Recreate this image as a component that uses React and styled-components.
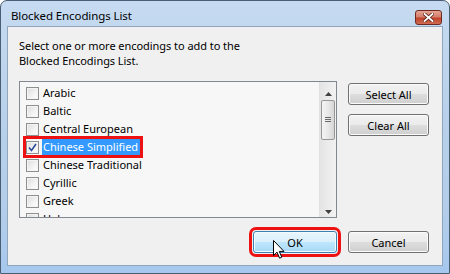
import React from 'react';
import styled, { createGlobalStyle } from 'styled-components';

const GlobalStyle = createGlobalStyle`
  html, body {
    margin: 0;
    padding: 0;
    background: #ffffff;
  }
  body {
    font-family: "Noto Sans", "Open Sans", sans-serif;
    font-size: 11px;
    color: #000;
  }
`;

const Window = styled.div`
  position: relative;
  width: 450px;
  height: 274px;
  box-sizing: border-box;
  border: 1px solid #4b5d70;
  border-radius: 7px 7px 0 0;
  background: linear-gradient(180deg, #c6dbf1 0%, #b9d1ea 40%, #b2cdea 80%, #a6c8ee 100%);
  padding: 0 6px 7px 6px;
  display: flex;
  flex-direction: column;
`;

const TitleBar = styled.div`
  height: 26px;
  display: flex;
  align-items: center;
  justify-content: space-between;
  padding-left: 4px;
`;

const Title = styled.span`
  font-size: 11.5px;
  color: #000;
  letter-spacing: -0.1px;
  padding-top: 4px;
`;

const CloseButton = styled.div`
  width: 27px;
  height: 15px;
  margin-top: 8px;
  margin-right: 1px;
  box-sizing: border-box;
  border: 1px solid #6d2a22;
  border-radius: 3px;
  background: linear-gradient(180deg, #e8a493 0%, #d47f6c 45%, #c2422a 55%, #cf6d52 100%);
  display: flex;
  align-items: center;
  justify-content: center;
`;

const Client = styled.div`
  flex: 1;
  background: #f0f0f0;
  border: 1px solid #8fa6bd;
  padding: 11px 12px 12px 11px;
  display: grid;
  grid-template-columns: 318px 81px;
  grid-template-rows: auto 137px 22px;
  column-gap: 11px;
  row-gap: 13px;
`;

const Prompt = styled.p`
  grid-column: 1 / 3;
  margin: 0;
  line-height: 15px;
  font-size: 11px;
  letter-spacing: -0.05px;
`;

const ListBox = styled.div`
  position: relative;
  box-sizing: border-box;
  border: 1px solid #828790;
  background: #f7f7f7;
  overflow: hidden;
  display: flex;
`;

const Items = styled.ul`
  flex: 1;
  list-style: none;
  margin: 0;
  padding: 2px 0 0 6px;
`;

const Item = styled.li`
  height: 18px;
  display: flex;
  align-items: center;
`;

const ItemInner = styled.span`
  display: inline-flex;
  align-items: center;
  height: 16px;
  ${p => p.$marked && `
    outline: 3px solid #ee1111;
    outline-offset: 0px;
  `}
`;

const Box = styled.span`
  width: 13px;
  height: 13px;
  box-sizing: border-box;
  border: 1px solid #8e8f8f;
  background: linear-gradient(135deg, #dcdcdc 0%, #f4f4f4 60%, #ffffff 100%);
  box-shadow: inset 0 0 0 1px #f4f4f4;
  display: flex;
  align-items: center;
  justify-content: center;
  margin-right: 3px;
`;

const Label = styled.span`
  height: 16px;
  line-height: 16px;
  padding: 0 2px 0 1px;
  font-size: 11px;
  color: ${p => (p.$selected ? '#ffffff' : '#000000')};
  background: ${p => (p.$selected ? '#3399ff' : 'transparent')};
`;

const ScrollBar = styled.div`
  width: 16px;
  background: linear-gradient(90deg, #e4e4e4, #f2f2f2);
  border-left: 1px solid #e0e0e0;
  display: flex;
  flex-direction: column;
  align-items: center;
  padding-top: 6px;
`;

const Arrow = styled.div`
  height: 11px;
  display: flex;
  align-items: center;
  justify-content: center;
`;

const Thumb = styled.div`
  margin-top: 1px;
  width: 14px;
  height: 40px;
  box-sizing: border-box;
  border: 1px solid #979797;
  border-radius: 2px;
  background: linear-gradient(90deg, #f4f4f4 0%, #e8e8e8 50%, #d6d6d6 100%);
  display: flex;
  align-items: center;
  justify-content: center;
`;

const Spacer = styled.div`
  flex: 1;
`;

const SideButtons = styled.div`
  display: flex;
  flex-direction: column;
  gap: 9px;
  padding-top: 2px;
`;

const Button = styled.div`
  position: relative;
  height: 22px;
  box-sizing: border-box;
  border: 1px solid ${p => (p.$hot ? '#3c7fb1' : '#707070')};
  border-radius: 3px;
  display: flex;
  align-items: center;
  justify-content: center;
  font-size: 11px;
  color: #000;
  box-shadow: inset 0 0 0 1px ${p => (p.$hot ? '#f4fbff' : '#fbfbfb')};
  background: ${p =>
    p.$hot
      ? 'linear-gradient(180deg, #eaf6fd 0%, #d9f0fc 48%, #bee6fd 52%, #a7d9f5 100%)'
      : 'linear-gradient(180deg, #f2f2f2 0%, #ebebeb 48%, #dddddd 52%, #cfcfcf 100%)'};
  ${p => p.$marked && `
    outline: 3px solid #ee1111;
    outline-offset: 1px;
  `}
`;

const Footer = styled.div`
  grid-column: 1 / 3;
  display: flex;
  justify-content: flex-end;
  gap: 11px;
`;

const OkButton = styled(Button)`
  width: 84px;
`;

const CancelButton = styled(Button)`
  width: 81px;
`;

const Cursor = styled.svg`
  position: absolute;
  left: 19px;
  top: 8px;
`;

const encodings = [
  'Arabic',
  'Baltic',
  'Central European',
  'Chinese Simplified',
  'Chinese Traditional',
  'Cyrillic',
  'Greek',
  'Hebrew',
];

const Check = () => (
  <svg width="9" height="9" viewBox="0 0 9 9">
    <path d="M1 4.5 L3.5 7.5 L8 1" fill="none" stroke="#2b4c9b" strokeWidth="1.6" />
  </svg>
);

export default function App() {
  return (
    <>
      <GlobalStyle />
      <Window>
        <TitleBar>
          <Title>Blocked Encodings List</Title>
          <CloseButton>
            <svg width="11" height="9" viewBox="0 0 11 9">
              <path d="M1.5 1 L9.5 8 M9.5 1 L1.5 8" stroke="#5a2019" strokeWidth="3.4" strokeLinecap="square" />
              <path d="M1.5 1 L9.5 8 M9.5 1 L1.5 8" stroke="#ffffff" strokeWidth="1.8" strokeLinecap="square" />
            </svg>
          </CloseButton>
        </TitleBar>
        <Client>
          <Prompt>
            Select one or more encodings to add to the
            <br />
            Blocked Encodings List.
          </Prompt>
          <ListBox>
            <Items>
              {encodings.map(name => {
                const sel = name === 'Chinese Simplified';
                return (
                  <Item key={name}>
                    <ItemInner $marked={sel}>
                      <Box>{sel && <Check />}</Box>
                      <Label $selected={sel}>{name}</Label>
                    </ItemInner>
                  </Item>
                );
              })}
            </Items>
            <ScrollBar>
              <Arrow>
                <svg width="7" height="4" viewBox="0 0 7 4">
                  <path d="M0 4 L3.5 0 L7 4 Z" fill="#404040" />
                </svg>
              </Arrow>
              <Thumb>
                <svg width="6" height="6" viewBox="0 0 6 6">
                  <path d="M0 0.5 H6 M0 2.5 H6 M0 4.5 H6" stroke="#6a6a6a" strokeWidth="1" />
                </svg>
              </Thumb>
              <Spacer />
              <Arrow>
                <svg width="7" height="4" viewBox="0 0 7 4">
                  <path d="M0 0 L7 0 L3.5 4 Z" fill="#404040" />
                </svg>
              </Arrow>
            </ScrollBar>
          </ListBox>
          <SideButtons>
            <Button>Select All</Button>
            <Button>Clear All</Button>
          </SideButtons>
          <Footer>
            <OkButton $hot $marked>
              OK
              <Cursor width="12" height="19" viewBox="0 0 12 19">
                <path
                  d="M0.5 0.5 L0.5 15.5 L4 12.2 L6.6 18.2 L8.8 17.2 L6.3 11.4 L11 11.4 Z"
                  fill="#ffffff"
                  stroke="#000000"
                  strokeWidth="1"
                  strokeLinejoin="round"
                />
              </Cursor>
            </OkButton>
            <CancelButton>Cancel</CancelButton>
          </Footer>
        </Client>
      </Window>
    </>
  );
}
